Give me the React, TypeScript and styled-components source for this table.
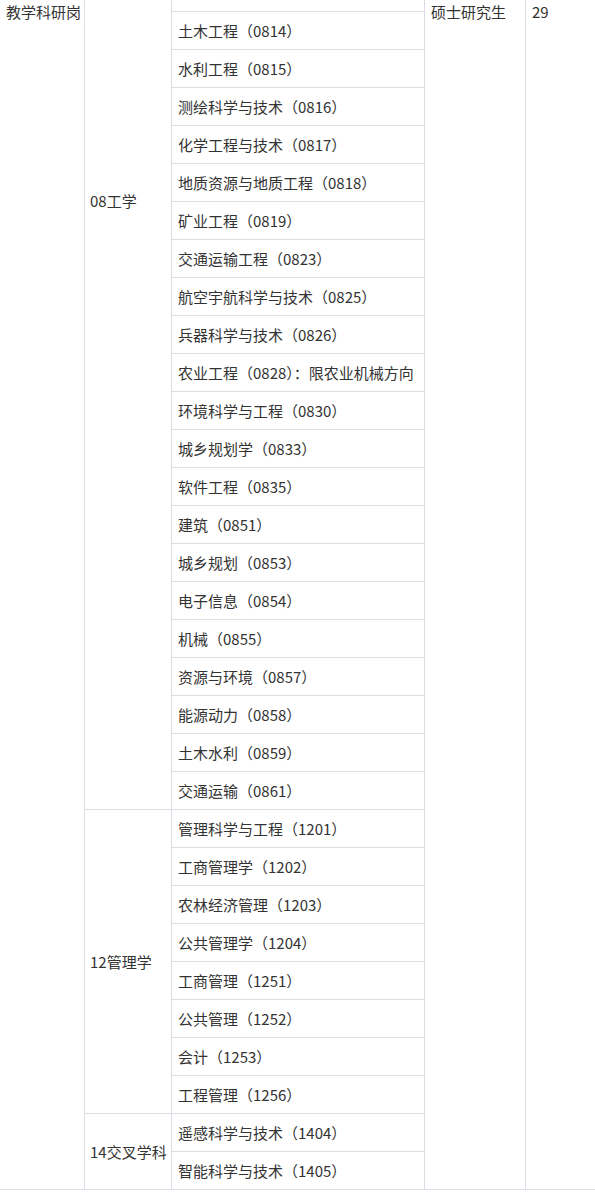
import React from 'react';
import styled, { createGlobalStyle } from 'styled-components';

const GlobalStyle = createGlobalStyle`
  html, body {
    margin: 0;
    padding: 0;
    background: #fff;
  }
  body {
    font-family: 'Noto Sans CJK SC', 'Noto Sans', sans-serif;
    color: #333;
  }
`;

const LINE = '#dcdce4';

// 08 组的上半部分在截图外面，标签按整组高度居中
const HIDDEN_ABOVE = 407;

const s = {
  Table: styled.div`
    display: grid;
    grid-template-columns: 85px 87px 253px 101px 69px;
    grid-template-rows: 12px repeat(31, 38px);
    width: 595px;
    font-size: 15px;
    line-height: 22px;
  `,
  SpanCell: styled.div<{ $col: number; $right?: boolean }>`
    grid-column: ${(p) => p.$col};
    grid-row: 1 / -1;
    box-sizing: border-box;
    padding: 1px 6px 0;
    border-bottom: 1px solid ${LINE};
    border-right: ${(p) => (p.$right ? `1px solid ${LINE}` : 'none')};
    white-space: nowrap;
  `,
  GroupCell: styled.div<{ $from: number; $to: number; $clip?: number }>`
    grid-column: 2;
    grid-row: ${(p) => p.$from} / ${(p) => p.$to};
    box-sizing: border-box;
    display: flex;
    align-items: center;
    padding: 0 5px ${(p) => p.$clip || 0}px;
    border-right: 1px solid ${LINE};
    border-bottom: 1px solid ${LINE};
    white-space: nowrap;
  `,
  Subject: styled.div`
    grid-column: 3;
    box-sizing: border-box;
    display: flex;
    align-items: center;
    padding: 0 6px;
    border-right: 1px solid ${LINE};
    border-bottom: 1px solid ${LINE};
    white-space: nowrap;
  `,
};

const engineering = [
  '土木工程（0814）',
  '水利工程（0815）',
  '测绘科学与技术（0816）',
  '化学工程与技术（0817）',
  '地质资源与地质工程（0818）',
  '矿业工程（0819）',
  '交通运输工程（0823）',
  '航空宇航科学与技术（0825）',
  '兵器科学与技术（0826）',
  '农业工程（0828）：限农业机械方向',
  '环境科学与工程（0830）',
  '城乡规划学（0833）',
  '软件工程（0835）',
  '建筑（0851）',
  '城乡规划（0853）',
  '电子信息（0854）',
  '机械（0855）',
  '资源与环境（0857）',
  '能源动力（0858）',
  '土木水利（0859）',
  '交通运输（0861）',
];

const management = [
  '管理科学与工程（1201）',
  '工商管理学（1202）',
  '农林经济管理（1203）',
  '公共管理学（1204）',
  '工商管理（1251）',
  '公共管理（1252）',
  '会计（1253）',
  '工程管理（1256）',
];

const cross = ['遥感科学与技术（1404）', '智能科学与技术（1405）'];

const App = (): JSX.Element => {
  return (
    <>
      <GlobalStyle />
      <s.Table>
        <s.SpanCell $col={1} $right>
          教学科研岗
        </s.SpanCell>
        <s.GroupCell $from={1} $to={23} $clip={HIDDEN_ABOVE}>
          08工学
        </s.GroupCell>
        <s.GroupCell $from={23} $to={31}>
          12管理学
        </s.GroupCell>
        <s.GroupCell $from={31} $to={33}>
          14交叉学科
        </s.GroupCell>
        <s.Subject />
        {[...engineering, ...management, ...cross].map((name) => (
          <s.Subject key={name}>{name}</s.Subject>
        ))}
        <s.SpanCell $col={4} $right>
          硕士研究生
        </s.SpanCell>
        <s.SpanCell $col={5}>29</s.SpanCell>
      </s.Table>
    </>
  );
};

export default App;
